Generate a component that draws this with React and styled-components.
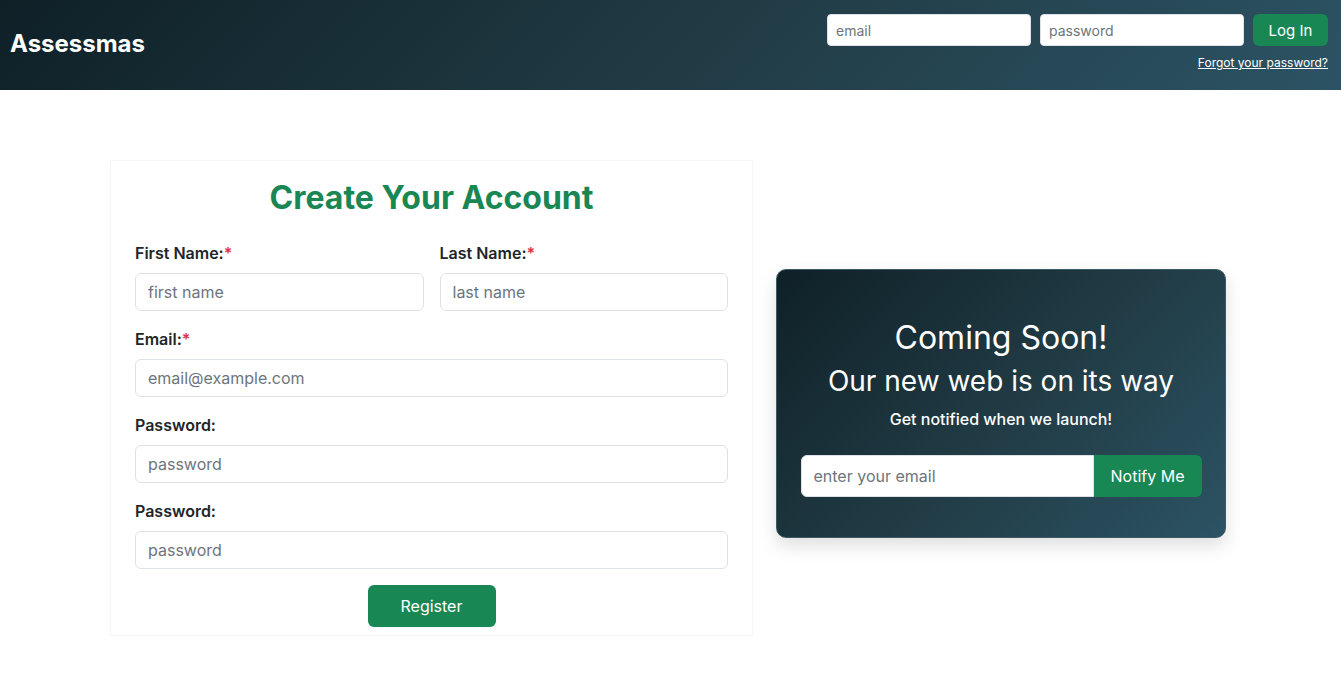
import React from 'react';
import styled, { createGlobalStyle } from 'styled-components';

const GlobalStyle = createGlobalStyle`
  * { box-sizing: border-box; }
  body {
    margin: 0;
    font-family: Inter, "Noto Sans", sans-serif;
    color: #212529;
    background: #fff;
  }
  input::placeholder { color: #6c757d; }
`;

const Header = styled.header`
  height: 90px;
  display: flex;
  justify-content: space-between;
  align-items: center;
  padding: 0 13px 0 10px;
  background: linear-gradient(135deg, #0f2027, #203a43, #2c5364);
`;

const Logo = styled.div`
  color: #fff;
  font-size: 24px;
  font-weight: 700;
  margin-top: -3px;
`;

const LoginBox = styled.div`
  display: flex;
  flex-direction: column;
  align-items: flex-end;
  gap: 9px;
  margin-top: -6px;
`;

const LoginRow = styled.div`
  display: flex;
  gap: 9px;
`;

const SmallInput = styled.input`
  width: 204px;
  height: 32px;
  border: 1px solid #dee2e6;
  border-radius: 4px;
  padding: 0 8px;
  font-family: inherit;
  font-size: 14px;
  background: #fff;
`;

const Button = styled.button`
  background: #198754;
  color: #fff;
  border: none;
  border-radius: ${p => (p.$attached ? '0 6px 6px 0' : '6px')};
  font-family: inherit;
  font-size: ${p => p.$size || '16px'};
  width: ${p => p.$w};
  height: ${p => p.$h};
  flex-shrink: 0;
  cursor: pointer;
`;

const Forgot = styled.a`
  color: #fff;
  font-size: 12px;
  text-decoration: underline;
`;

const Main = styled.main`
  display: flex;
  align-items: center;
  padding: 70px 0 0 110px;
`;

const FormPanel = styled.form`
  width: 643px;
  padding: 18px 24px 8px;
  border: 1px solid #f6f6f6;
`;

const Title = styled.h1`
  margin: 0 0 24px;
  text-align: center;
  color: #198754;
  font-size: 32px;
  font-weight: 700;
  line-height: 1.2;
`;

const Row = styled.div`
  display: grid;
  grid-template-columns: 1fr 1fr;
  gap: 16px;
`;

const Field = styled.div`
  margin-bottom: 16px;
`;

const Label = styled.label`
  display: block;
  font-size: 16px;
  font-weight: 600;
  line-height: 24px;
  margin-bottom: 8px;
`;

const Star = styled.span`
  color: #dc3545;
`;

const Input = styled.input`
  width: 100%;
  height: ${p => p.$h || '38px'};
  border: 1px solid #dee2e6;
  border-radius: ${p => (p.$attached ? '6px 0 0 6px' : '6px')};
  padding: 0 12px;
  font-family: inherit;
  font-size: 16px;
  background: #fff;
`;

const Center = styled.div`
  display: flex;
  justify-content: center;
`;

const RightCol = styled.div`
  width: 495px;
  display: flex;
  justify-content: center;
  padding-top: 10px;
`;

const Card = styled.div`
  width: 450px;
  padding: 49px 23px 40px 24px;
  border-radius: 10px;
  border: 1px solid #3d5965;
  background: linear-gradient(135deg, #0f2027, #203a43, #2c5364);
  color: #fff;
  text-align: center;
  box-shadow: 0 8px 18px rgba(0, 0, 0, 0.13);
`;

const CardTitle = styled.h2`
  margin: 0 0 8px;
  font-size: 32px;
  font-weight: 400;
  line-height: 1.2;
`;

const CardSub = styled.h3`
  margin: 0 0 8px;
  font-size: 28px;
  font-weight: 400;
  line-height: 1.2;
`;

const CardText = styled.p`
  margin: 0 0 24px;
  font-size: 16px;
  font-weight: 500;
  line-height: 24px;
`;

const InputGroup = styled.div`
  display: flex;
`;

export default function App() {
  return (
    <>
      <GlobalStyle />
      <Header>
        <Logo>Assessmas</Logo>
        <LoginBox>
          <LoginRow>
            <SmallInput placeholder="email" />
            <SmallInput type="password" placeholder="password" />
            <Button $w="75px" $h="32px" $size="15px">Log In</Button>
          </LoginRow>
          <Forgot href="#">Forgot your password?</Forgot>
        </LoginBox>
      </Header>
      <Main>
        <FormPanel onSubmit={e => e.preventDefault()}>
          <Title>Create Your Account</Title>
          <Row>
            <Field>
              <Label>First Name:<Star>*</Star></Label>
              <Input placeholder="first name" />
            </Field>
            <Field>
              <Label>Last Name:<Star>*</Star></Label>
              <Input placeholder="last name" />
            </Field>
          </Row>
          <Field>
            <Label>Email:<Star>*</Star></Label>
            <Input placeholder="email@example.com" />
          </Field>
          <Field>
            <Label>Password:</Label>
            <Input type="password" placeholder="password" />
          </Field>
          <Field>
            <Label>Password:</Label>
            <Input type="password" placeholder="password" />
          </Field>
          <Center>
            <Button $w="128px" $h="42px">Register</Button>
          </Center>
        </FormPanel>
        <RightCol>
          <Card>
            <CardTitle>Coming Soon!</CardTitle>
            <CardSub>Our new web is on its way</CardSub>
            <CardText>Get notified when we launch!</CardText>
            <InputGroup>
              <Input $h="42px" $attached placeholder="enter your email" />
              <Button $w="108px" $h="42px" $attached>Notify Me</Button>
            </InputGroup>
          </Card>
        </RightCol>
      </Main>
    </>
  );
}
